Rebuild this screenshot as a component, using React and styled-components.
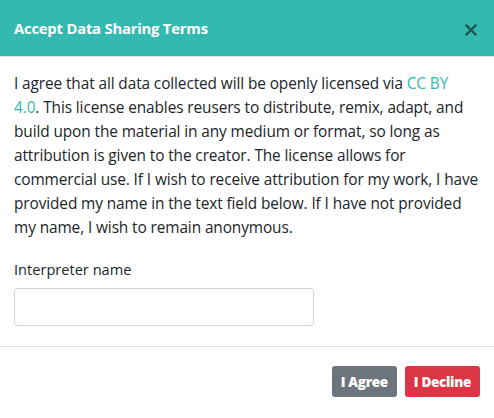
import React from "react";
import styled, { createGlobalStyle } from "styled-components";

const GlobalStyle = createGlobalStyle`
  * { box-sizing: border-box; }
  body {
    margin: 0;
    background: #fff;
    font-family: "Open Sans", "Noto Sans", sans-serif;
    color: #212529;
  }
`;

const Modal = styled.div`
  width: 494px;
  height: 418px;
  display: flex;
  flex-direction: column;
  background: #fff;
`;

const Header = styled.div`
  height: 57px;
  background: #33b9b0;
  border-bottom: 1px solid #dee2e6;
  display: flex;
  align-items: center;
  justify-content: space-between;
  padding: 0 14px 0 14px;
`;

const Title = styled.h5`
  margin: 0;
  color: #fff;
  font-size: 14.8px;
  font-weight: 700;
  letter-spacing: -0.2px;
  padding-bottom: 1px;
`;

const Close = styled.button`
  border: 0;
  background: none;
  padding: 0;
  margin-top: 4px;
  margin-right: 2px;
  width: 14px;
  height: 14px;
  display: flex;
  align-items: center;
  justify-content: center;
  cursor: pointer;
`;

const Body = styled.div`
  padding: 15px 14px 0;
  flex: 1;
  border-bottom: 1px solid #dee2e6;
`;

const Text = styled.p`
  margin: 0 0 17px;
  font-size: 15.4px;
  line-height: 24px;
  letter-spacing: -0.1px;
  white-space: nowrap;
`;

const Link = styled.a`
  color: #33b9b0;
  text-decoration: none;
`;

const Label = styled.label`
  display: block;
  font-size: 14.6px;
  line-height: 24px;
  margin-bottom: 7px;
`;

const Input = styled.input`
  display: block;
  width: 300px;
  height: 38px;
  border: 1px solid #ced4da;
  border-radius: 4px;
  padding: 6px 12px;
  font: inherit;
`;

const Footer = styled.div`
  height: 71px;
  display: flex;
  justify-content: flex-end;
  align-items: flex-start;
  gap: 8px;
  padding: 19px 14px 0;
`;

const Button = styled.button`
  height: 31px;
  border: 0;
  border-radius: 3px;
  padding: 0 9px;
  color: #fff;
  font-family: "Open Sans", sans-serif;
  font-size: 13.5px;
  font-weight: 800;
  letter-spacing: -0.3px;
  background: ${(p) => (p.$variant === "danger" ? "#dc3545" : "#6c757d")};
`;

export default function App() {
  return (
    <>
      <GlobalStyle />
      <Modal>
        <Header>
          <Title>Accept Data Sharing Terms</Title>
          <Close aria-label="Close">
            <svg width="12" height="12" viewBox="0 0 12 12">
              <path d="M1.5 1.5L10.5 10.5M10.5 1.5L1.5 10.5" stroke="#1d5a55" strokeWidth="2.4" strokeLinecap="square" />
            </svg>
          </Close>
        </Header>
        <Body>
          <Text>
            I agree that all data collected will be openly licensed via <Link href="#">CC BY</Link>
            <br />
            <Link href="#">4.0</Link>. This license enables reusers to distribute, remix, adapt, and
            <br />
            build upon the material in any medium or format, so long as
            <br />
            attribution is given to the creator. The license allows for
            <br />
            commercial use. If I wish to receive attribution for my work, I have
            <br />
            provided my name in the text field below. If I have not provided
            <br />
            my name, I wish to remain anonymous.
          </Text>
          <Label>Interpreter name</Label>
          <Input type="text" />
        </Body>
        <Footer>
          <Button>I Agree</Button>
          <Button $variant="danger">I Decline</Button>
        </Footer>
      </Modal>
    </>
  );
}
